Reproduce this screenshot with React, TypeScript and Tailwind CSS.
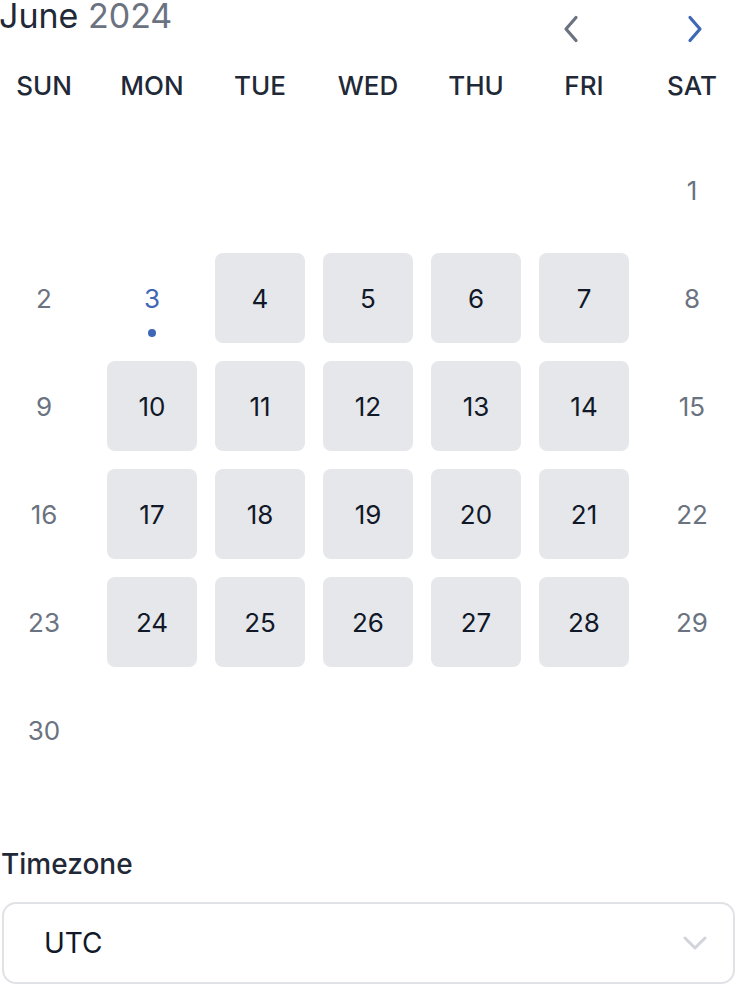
import React from "react";

const weekdays = ["SUN", "MON", "TUE", "WED", "THU", "FRI", "SAT"];

type Cell = { d: number | null; kind: "empty" | "gray" | "avail" | "today" };

function buildCells(): Cell[] {
  const cells: Cell[] = [];
  for (let i = 0; i < 6; i++) cells.push({ d: null, kind: "empty" });
  for (let d = 1; d <= 30; d++) {
    const dow = (6 + d - 1) % 7;
    if (d === 3) cells.push({ d, kind: "today" });
    else if (dow === 0 || dow === 6) cells.push({ d, kind: "gray" });
    else if (d > 3) cells.push({ d, kind: "avail" });
    else cells.push({ d, kind: "gray" });
  }
  return cells;
}

export default function App() {
  const cells = buildCells();
  return (
    <div
      className="w-[738px] h-[986px] overflow-hidden bg-white text-[#1f2937]"
      style={{ fontFamily: "Inter, 'Noto Sans', sans-serif" }}
    >
      {/* Header */}
      <div className="flex h-[58px] items-start justify-between">
        <div className="ml-[-1px] mt-[-1px] text-[34px] leading-[34px] text-[#1f2937]">
          June <span className="text-[#6b7280]">2024</span>
        </div>
        <div className="mr-[19px] mt-[5px] flex gap-[76px]">
          <button className="flex h-[48px] w-[48px] items-center justify-center">
            <svg width="18" height="28" viewBox="0 0 18 28" fill="none">
              <path d="M14 2.5 L4 14 L14 25.5" stroke="#6b7280" strokeWidth="3.2" strokeLinecap="round" strokeLinejoin="round" />
            </svg>
          </button>
          <button className="flex h-[48px] w-[48px] items-center justify-center">
            <svg width="18" height="28" viewBox="0 0 18 28" fill="none">
              <path d="M4 2.5 L14 14 L4 25.5" stroke="#3f67b5" strokeWidth="3.2" strokeLinecap="round" strokeLinejoin="round" />
            </svg>
          </button>
        </div>
      </div>

      {/* Weekdays */}
      <div className="ml-[-1px] grid h-[56px] grid-cols-[repeat(7,90px)] items-center gap-x-[18px]">
        {weekdays.map((w) => (
          <div key={w} className="text-center text-[26px] font-medium leading-none text-[#1f2937]">
            {w}
          </div>
        ))}
      </div>

      {/* Dates */}
      <div className="ml-[-1px] mt-[31px] grid grid-cols-[repeat(7,90px)] auto-rows-[90px] gap-[18px]">
        {cells.map((c, i) => {
          if (c.kind === "empty") return <div key={i} />;
          if (c.kind === "avail")
            return (
              <div
                key={i}
                className="flex items-center justify-center rounded-[8px] bg-[#e5e7eb] pt-[1px] text-[26px] text-[#111827]"
              >
                {c.d}
              </div>
            );
          if (c.kind === "today")
            return (
              <div key={i} className="relative flex items-center justify-center pt-[1px] text-[26px] text-[#3f67b5]">
                {c.d}
                <span className="absolute left-1/2 top-[76px] h-[8px] w-[8px] -translate-x-1/2 rounded-full bg-[#3f67b5]" />
              </div>
            );
          return (
            <div key={i} className="flex items-center justify-center pt-[1px] text-[26px] text-[#6b7280]">
              {c.d}
            </div>
          );
        })}
      </div>

      {/* Timezone */}
      <div className="ml-[1px] mt-[73px] text-[28px] font-medium leading-[32px] text-[#1f2937]">Timezone</div>
      <div className="ml-[2px] mr-[3px] mt-[22px] flex h-[82px] items-center justify-between rounded-[14px] border-2 border-[#e0e2e6] pl-[40px] pr-[26px]">
        <span className="text-[28px] text-[#111827]">UTC</span>
        <svg width="24" height="14" viewBox="0 0 24 14" fill="none">
          <path d="M2 2 L12 12 L22 2" stroke="#d1d5db" strokeWidth="3" strokeLinecap="round" strokeLinejoin="round" />
        </svg>
      </div>
    </div>
  );
}
